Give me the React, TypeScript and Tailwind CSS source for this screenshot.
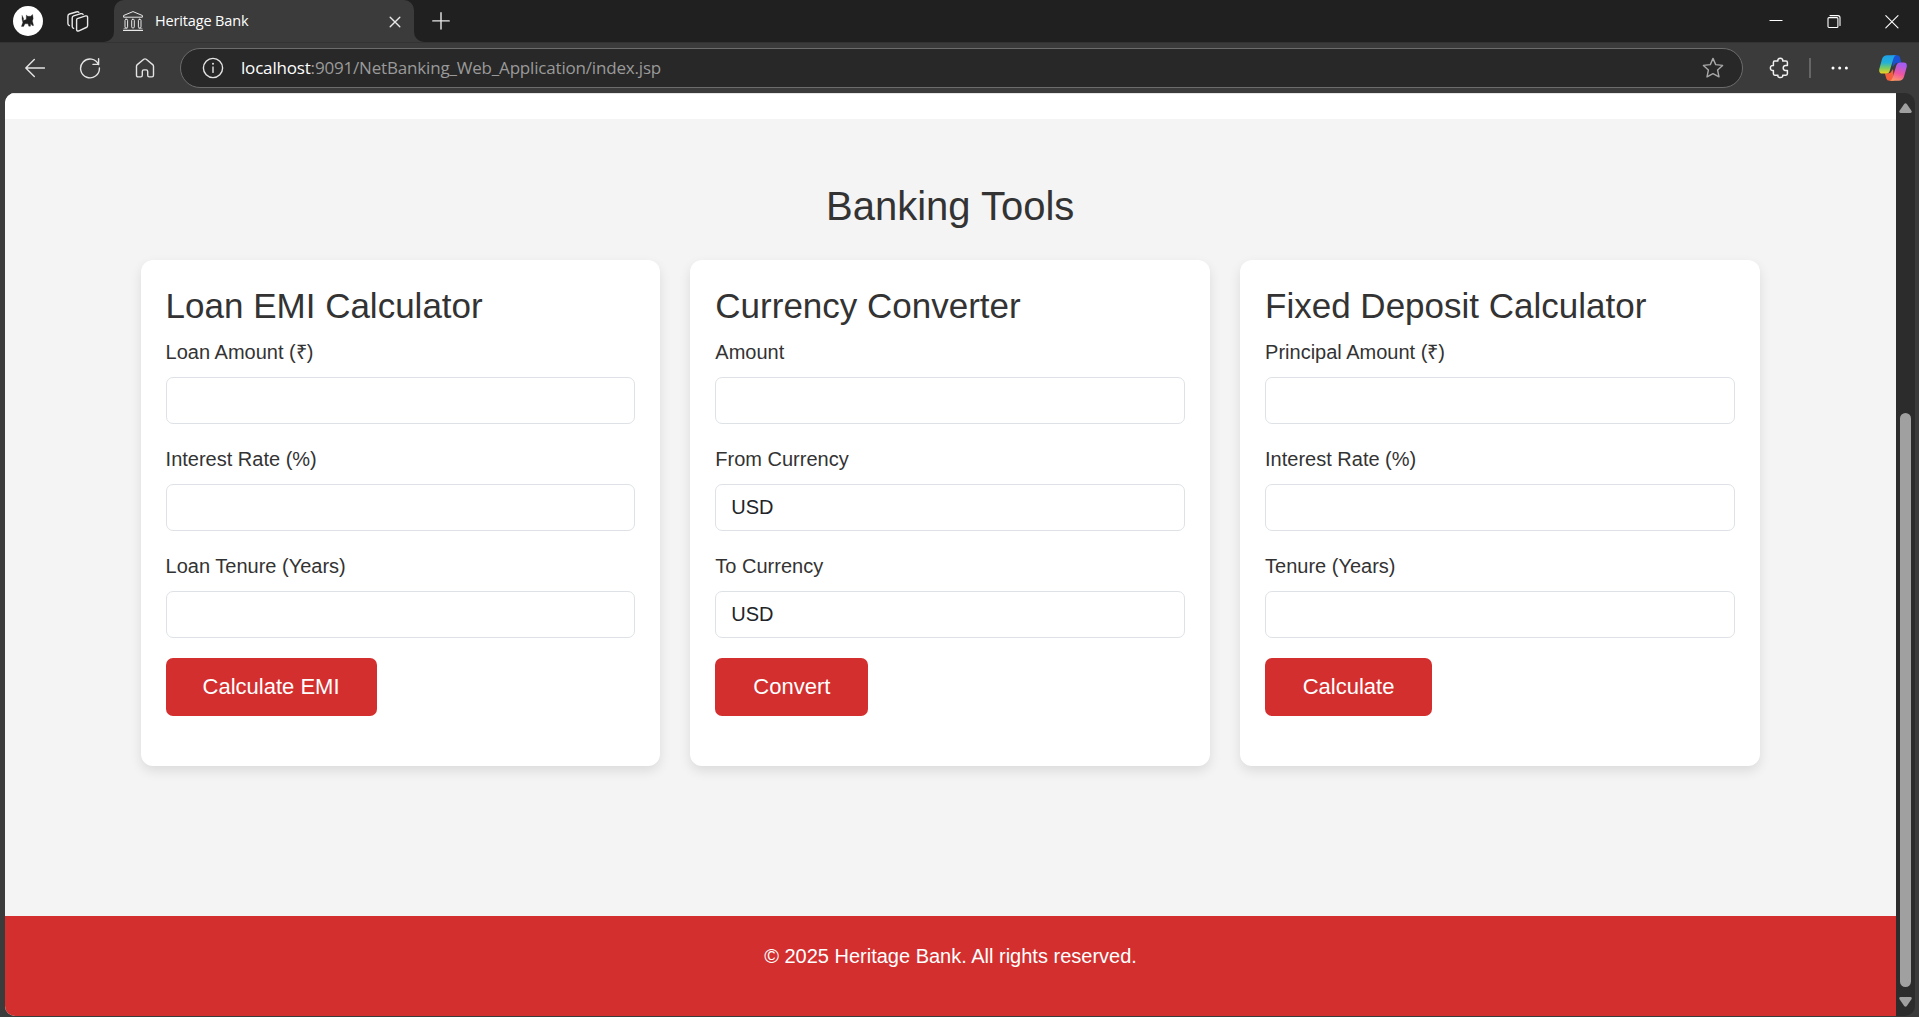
import type { ReactNode } from "react";

type IconProps = { box: string; className: string; children: ReactNode };

function Icon({ box, className, children }: IconProps) {
  return (
    <svg viewBox={box} className={`shrink-0 ${className}`} fill="none" stroke="currentColor" strokeWidth="1.4" strokeLinecap="round" strokeLinejoin="round">
      {children}
    </svg>
  );
}

function TabStrip() {
  return (
    <div className="flex h-[42px] items-start bg-[#202020] text-[#e8e8e8]">
      <Icon box="0 0 30 30" className="mt-[6px] ml-[13px] h-[30px] w-[30px]">
        <circle cx="15" cy="15" r="15" fill="#fff" stroke="none" />
        <path
          d="M9.2 9.6 10.6 12.6 10.4 14.4 13.2 13.6 13.4 9 14.8 10.3 17.6 10.2 19.6 8.4 20.2 12.4 19.4 15.1 20.6 19.6 19 19.4 17.8 17.4 17.4 20.2 15.8 20.2 15 17.8 12 17.8 10.6 20.4 8.4 20.4 9.8 16.6 9 13Z"
          fill="#202020"
          stroke="#202020"
          strokeWidth=".3"
        />
      </Icon>
      <Icon box="0 0 22 22" className="mt-[11px] ml-[24px] h-[22px] w-[22px]">
        <path d="M10.3 7.6 18.6 4.9Q20.6 4.5 20.6 6.4V14.4Q20.6 15.9 19.2 16.5L11.9 19.9Q9.6 20.6 9.6 18.4V8.9Q9.6 7.9 10.3 7.6Z" />
        <path d="M6.6 17.3Q5.2 16.9 5.2 15.5V7Q5.2 5.4 6.6 4.9L13.2 2.8Q15.4 2.2 16.1 3.5" />
        <path d="M2.4 14.6Q.9 14.2.9 12.6V5.2Q.9 3.5 2.4 3L9.2 1Q10.9.5 11.8 1.3" />
      </Icon>
      <div className="relative ml-[25px] flex h-[42px] w-[300px] rounded-t-[10px] bg-[#3b3b3b]">
        <div className="absolute bottom-0 -left-[10px] h-[10px] w-[10px] bg-[#3b3b3b]">
          <div className="h-full w-full rounded-br-[10px] bg-[#202020]" />
        </div>
        <div className="absolute -right-[10px] bottom-0 h-[10px] w-[10px] bg-[#3b3b3b]">
          <div className="h-full w-full rounded-bl-[10px] bg-[#202020]" />
        </div>
        <Icon box="0 0 20 20" className="mt-[11px] ml-[9px] h-[20px] w-[20px]">
          <g strokeWidth="1">
            <path d="M.6 5.8V4.5L10 .6 19.4 4.5V5.8Z" />
            <path d="M.5 19.3H19.5" strokeWidth="1.2" />
            <path d="M1 17.4H4M16 17.4H19" strokeWidth=".6" />
            <rect x="2" y="8.3" width="2.6" height="8.6" rx="1" />
            <rect x="8.7" y="8.3" width="2.6" height="8.6" rx="1" />
            <rect x="15.4" y="8.3" width="2.6" height="8.6" rx="1" />
          </g>
        </Icon>
        <span className="mt-[9px] ml-[12px] font-['Open_Sans',sans-serif] text-[14.5px] leading-[24px] tracking-[-0.15px] text-white">Heritage Bank</span>
        <Icon box="0 0 12 12" className="mt-[16px] mr-[13px] ml-auto h-[12px] w-[12px]">
          <path d="M1.2 1.2 10.8 10.8M10.8 1.2 1.2 10.8" />
        </Icon>
      </div>
      <Icon box="0 0 18 18" className="mt-[12px] ml-[17.5px] h-[18px] w-[18px]">
        <path d="M9 .8V17M.8 8.9H17.2" />
      </Icon>
      <Icon box="0 0 14 14" className="mt-[14px] ml-auto h-[14px] w-[14px] text-white">
        <path d="M.5 6.5H13.5" strokeWidth="1" strokeLinecap="butt" />
      </Icon>
      <Icon box="0 0 14 14" className="mt-[15px] ml-[44px] h-[14px] w-[14px] text-white">
        <g strokeWidth="1.1">
          <rect x="1" y="2.6" width="9.9" height="9.9" rx="1" />
          <path d="M3 .6H10.9Q13 .6 13 2.7V10.4" />
        </g>
      </Icon>
      <Icon box="0 0 14 14" className="mt-[15px] mr-[20.5px] ml-[44px] h-[14px] w-[14px] text-white">
        <path d="M.8.6 13 12.8M13 .6.8 12.8" strokeWidth="1.1" />
      </Icon>
    </div>
  );
}

function Toolbar() {
  return (
    <div className="flex h-[51px] items-center border-t border-[#333333] bg-[#3b3b3b] text-[#e4e4e4]">
      <Icon box="0 0 20 20" className="ml-[25px] h-[20px] w-[20px]">
        <path d="M9.3 1.5.8 10 9.3 18.5M1 10H19.4" />
      </Icon>
      <Icon box="0 0 22 22" className="ml-[34px] h-[22px] w-[22px]">
        <path d="M19.6 7.6A9.4 9.4 0 1 0 20.4 11M19.6 1.8V7.4H14" />
      </Icon>
      <Icon box="0 0 20 20" className="ml-[34px] h-[20px] w-[20px]">
        <path d="M1.5 8.3Q1.5 7.3 2.3 6.6L8.8 1.3Q10 .4 11.2 1.3L17.7 6.6Q18.5 7.3 18.5 8.3V17.3Q18.5 18.9 17 18.9H14.2Q12.7 18.9 12.7 17.3V13.6Q12.7 11.9 11.2 11.9H8.8Q7.3 11.9 7.3 13.6V17.3Q7.3 18.9 5.8 18.9H3Q1.5 18.9 1.5 17.3Z" />
      </Icon>
      <div className="ml-[25px] flex h-[40px] w-[1563px] items-center rounded-full border border-[#6c6c6c] bg-[#282828]">
        <Icon box="0 0 22 22" className="ml-[20.5px] h-[22px] w-[22px]">
          <circle cx="11" cy="11" r="9.6" />
          <path d="M11 10V15.4" />
          <circle cx="11" cy="6.8" r="1" fill="currentColor" stroke="none" />
        </Icon>
        <span className="ml-[17.5px] font-['Open_Sans',sans-serif] text-[17px] leading-[24px] tracking-[-0.18px] whitespace-nowrap text-[#9a9a9a]">
          <span className="text-white">localhost</span>:9091/NetBanking_Web_Application/index.jsp
        </span>
        <Icon box="0 0 22 22" className="mr-[18px] ml-auto h-[22px] w-[22px] text-[#a8a8a8]">
          <path d="M11 1.4 13.7 7.6 20.6 8.4 15.6 13 17 19.9 11 16.7 5 19.9 6.4 13 1.4 8.4 8.3 7.6Z" />
        </Icon>
      </div>
      <Icon box="0 0 22 22" className="ml-[26px] h-[22px] w-[22px] text-[#f0f0f0]">
        <path
          d="M5.6 4H8.9C8.6 2.2 9.6 1.3 11.3 1.3S14 2.2 13.7 4H17Q18.4 4 18.4 5.4V8.5H16.5Q14.2 8.7 14.2 11T16.5 13.4H18.4V16.8Q18.4 18.2 17 18.2H13.7C14 19.9 13 20.6 11.3 20.6S8.6 19.9 8.9 18.2H5.8Q4.4 18.2 4.4 16.8V13.4C2.4 13.8 1.4 12.7 1.4 11S2.4 8.3 4.4 8.6V5.4Q4.4 4 5.6 4Z"
          strokeWidth="1.5"
        />
      </Icon>
      <div className="ml-[18px] h-[20px] w-[2px] bg-[#666666]" />
      <Icon box="0 0 18 4" className="ml-[20px] h-[4px] w-[18px] text-white">
        <g fill="currentColor" stroke="none">
          <circle cx="2" cy="2" r="1.5" />
          <circle cx="8.7" cy="2" r="1.5" />
          <circle cx="15.4" cy="2" r="1.5" />
        </g>
      </Icon>
      <Icon box="0 0 28 26" className="ml-[30px] h-[26px] w-[28px]">
        <defs>
          <linearGradient id="leafLeft" x1="0" y1="0" x2="0" y2="1">
            <stop offset="0" stopColor="#1f9fe8" />
            <stop offset=".4" stopColor="#22b1d8" />
            <stop offset=".7" stopColor="#7ccb62" />
            <stop offset="1" stopColor="#f5d21c" />
          </linearGradient>
          <linearGradient id="leafRight" x1="0.3" y1="0" x2="0" y2="1">
            <stop offset="0" stopColor="#a65cf0" />
            <stop offset=".5" stopColor="#f0559f" />
            <stop offset="1" stopColor="#ffa45c" />
          </linearGradient>
        </defs>
        <g stroke="none">
          <path d="M13 .3H18.2Q20.3.3 21 2.6L22.4 7.8H18.5Q16.5 7.8 15.5 9.8L13.8 12Z" fill="#1b52d4" />
          <path d="M15 25.7H10.3Q8 25.7 7.3 23.4L5.8 18.3H9.6Q11.8 18.3 12.6 16L14 14Z" fill="#f4603c" />
          <path d="M8.3.3H17.5Q15.4.5 14.6 3L10.7 16Q10 18.6 7.3 18.6H3.3Q-.5 18.4.3 14L3 4.3Q4.2.3 8.3.3Z" fill="url(#leafLeft)" />
          <path d="M19.8 25.7H10.6Q12.7 25.5 13.5 23L17.4 10.2Q18.1 7.6 20.8 7.6H24.8Q28.5 7.8 27.7 12L25 21.7Q23.8 25.7 19.8 25.7Z" fill="url(#leafRight)" />
        </g>
      </Icon>
    </div>
  );
}

type Field = { label: string; value?: string };
type Tool = { title: string; fields: Field[]; action: string; buttonWidth: string };

const tools: Tool[] = [
  {
    title: "Loan EMI Calculator",
    fields: [{ label: "Loan Amount (₹)" }, { label: "Interest Rate (%)" }, { label: "Loan Tenure (Years)" }],
    action: "Calculate EMI",
    buttonWidth: "w-[211px]",
  },
  {
    title: "Currency Converter",
    fields: [{ label: "Amount" }, { label: "From Currency", value: "USD" }, { label: "To Currency", value: "USD" }],
    action: "Convert",
    buttonWidth: "w-[153px]",
  },
  {
    title: "Fixed Deposit Calculator",
    fields: [{ label: "Principal Amount (₹)" }, { label: "Interest Rate (%)" }, { label: "Tenure (Years)" }],
    action: "Calculate",
    buttonWidth: "w-[167px]",
  },
];

function ToolCard({ tool }: { tool: Tool }) {
  return (
    <div className="h-[506px] rounded-[12px] bg-white px-[25px] pt-[25px] shadow-[0_5px_12px_rgba(0,0,0,0.1)]">
      <h2 className="mb-[10px] text-[35px] leading-[42px] whitespace-nowrap">{tool.title}</h2>
      {tool.fields.map((field) => (
        <label key={field.label} className="mb-[20px] block">
          <span className="mb-[10px] block text-[20px] leading-[30px]">{field.label}</span>
          <span className="flex h-[47px] items-center rounded-[7px] border border-[#dee2e6] px-[15px] pb-[2px] text-[20px] text-[#212529]">{field.value}</span>
        </label>
      ))}
      <button className={`h-[58px] rounded-[7px] bg-[#d32f2f] pb-[2px] text-[22px] text-white ${tool.buttonWidth}`}>{tool.action}</button>
    </div>
  );
}

function Scrollbar() {
  return (
    <div className="flex w-[19px] flex-col items-center bg-[#2c2c2c] pr-[0.5px] text-[#a0a0a0]">
      <svg viewBox="0 0 13 10" className="mt-[10px] h-[10px] w-[13px] shrink-0" fill="currentColor">
        <path d="M5.2 1Q6.5-.6 7.8 1L12.6 7.9Q13.2 10 11.5 10H1.5Q-.2 10 .4 7.9Z" />
      </svg>
      <div className="mt-[300px] h-[574px] w-[11px] shrink-0 rounded-full bg-[#a0a0a0]" />
      <svg viewBox="0 0 13 10" className="mt-[10px] h-[10px] w-[13px] shrink-0" fill="currentColor">
        <path d="M5.2 9Q6.5 10.6 7.8 9L12.6 2.1Q13.2 0 11.5 0H1.5Q-.2 0 .4 2.1Z" />
      </svg>
    </div>
  );
}

export default function App() {
  return (
    <div className="flex h-[1017px] w-[1919px] flex-col overflow-hidden bg-[#3b3b3b]">
      <TabStrip />
      <Toolbar />
      <div className="mr-[4px] ml-[5px] flex h-[923px] overflow-hidden rounded-[10px]">
        <main className="flex w-[1891px] flex-col bg-[#f4f4f4] font-['Liberation_Sans',Arial,sans-serif] text-[#333333]">
          <div className="h-[26px] border-t border-[#e6e6e6] bg-white" />
          <section className="h-[797px] pt-[63px] pr-[136.2px] pl-[135.6px]">
            <h1 className="mb-[30px] text-center text-[40px] leading-[48px]">Banking Tools</h1>
            <div className="grid grid-cols-3 gap-[30px]">
              {tools.map((tool) => (
                <ToolCard key={tool.title} tool={tool} />
              ))}
            </div>
          </section>
          <footer className="flex-1 bg-[#d32f2f] pt-[25px] text-center text-[20px] leading-[30px] text-white">© 2025 Heritage Bank. All rights reserved.</footer>
        </main>
        <Scrollbar />
      </div>
    </div>
  );
}
